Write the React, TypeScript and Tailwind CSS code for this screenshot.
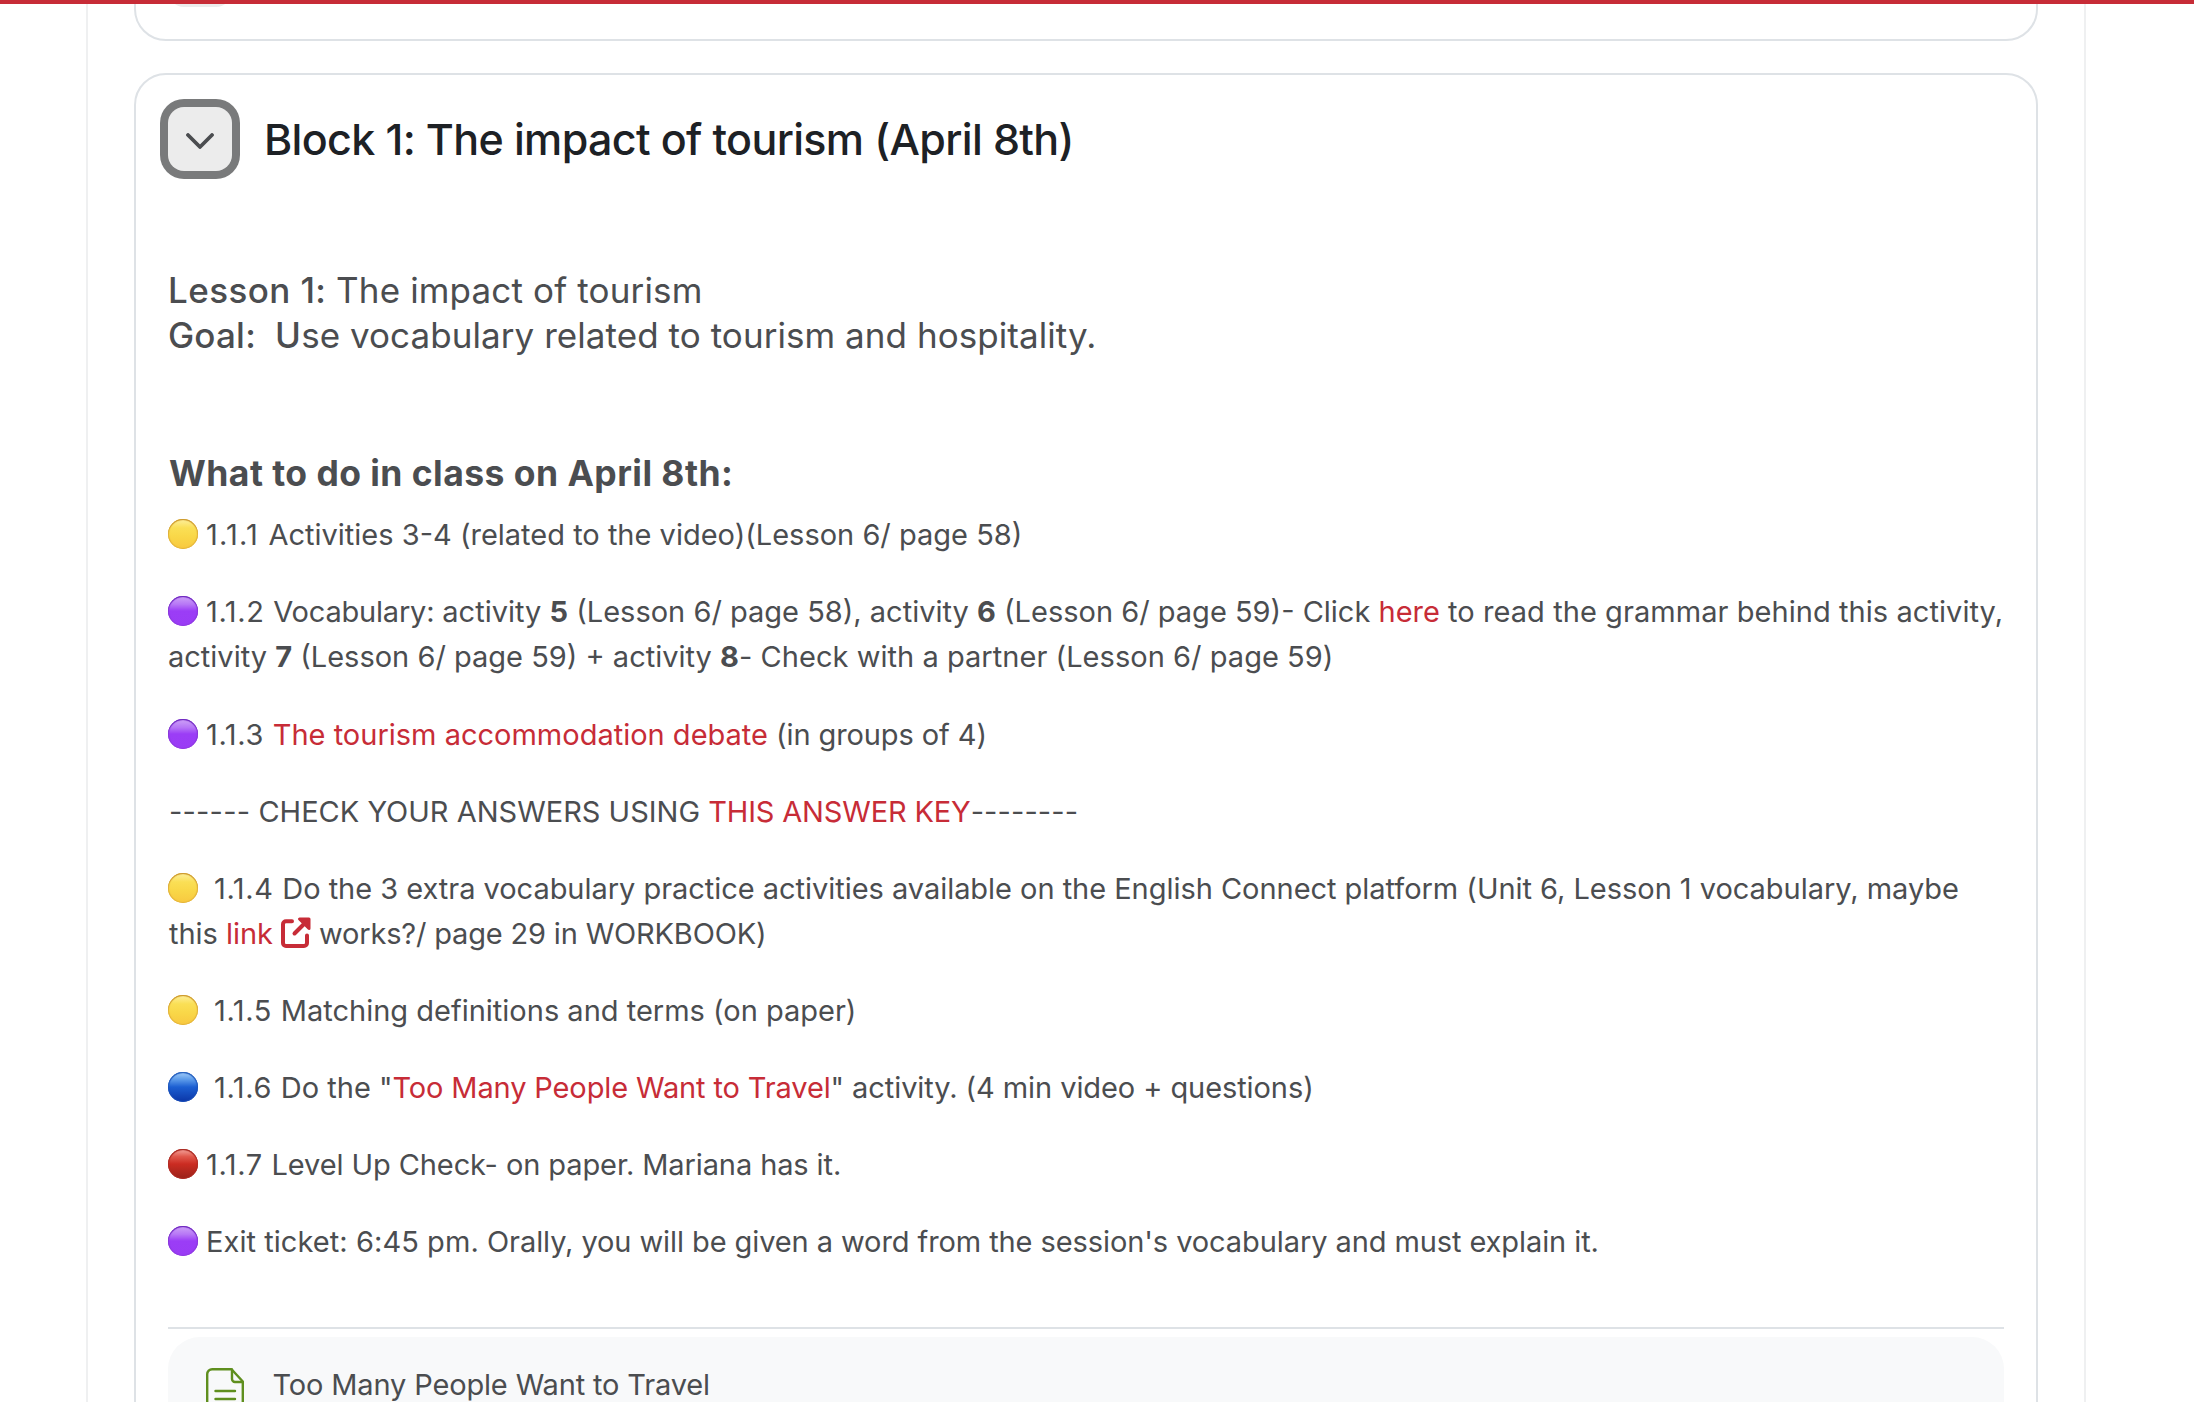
import type { ReactNode } from "react";

const DOT_COLORS = {
  yellow: "bg-[linear-gradient(180deg,#fdf0a0_0%,#fadf55_30%,#f9d748_60%,#f8c840_100%)] shadow-[inset_0_1px_1px_#c9962f,inset_0_0_1px_1px_#e3b33a]",
  purple: "bg-[linear-gradient(180deg,#cfa5f7_0%,#b777f6_28%,#9b3df6_50%,#9a3cf5_100%)] shadow-[inset_0_1px_1px_#6a28b8,inset_0_0_1px_1px_#8f3ae0]",
  blue: "bg-[linear-gradient(180deg,#a5cffa_0%,#5c9bea_25%,#1c5fd2_50%,#0b35a6_100%)] shadow-[inset_0_1px_1px_#2a66c0,inset_0_0_1px_1px_#1a4fb8]",
  red: "bg-[linear-gradient(180deg,#f5a8a0_0%,#e0584c_25%,#cb2c22_50%,#98221a_100%)] shadow-[inset_0_1px_1px_#a82a22,inset_0_0_1px_1px_#b02c24]",
};

function Dot({ color, wide = false }: { color: keyof typeof DOT_COLORS; wide?: boolean }) {
  return (
    <span
      className={`inline-block h-[30px] w-[30px] rounded-full align-[-4px] ${wide ? "mr-[16px]" : "mr-[8px]"} ${DOT_COLORS[color]}`}
    />
  );
}

function Num({ children }: { children: ReactNode }) {
  return <span className="tracking-[0.6px]">{children} </span>;
}

function Link({ children, className = "" }: { children: ReactNode; className?: string }) {
  return (
    <a href="#" className={`text-[#c72c37] ${className}`}>
      {children}
    </a>
  );
}

function ExternalIcon() {
  return (
    <svg viewBox="0 0 30 31" className="mx-2 inline-block h-[31px] w-[30px] align-[-4px]" fill="none" stroke="#c72c37" strokeWidth="4" strokeLinecap="round" strokeLinejoin="round">
      <path d="M11 4.2H5a3 3 0 0 0-3 3V26a3 3 0 0 0 3 3h18a3 3 0 0 0 3-3v-7.500" />
      <path d="M13.500 16.500 27 3" />
      <path d="M18.500 2H28v9.500z" strokeWidth="3" fill="#c72c37" />
    </svg>
  );
}

function PageIcon() {
  return (
    <svg viewBox="0 0 38 48" className="h-12 w-[38px] shrink-0" fill="none" stroke="#5f8f1e" strokeWidth="2.4" strokeLinecap="round" strokeLinejoin="round">
      <path d="M25.500 1.200H6.200a5 5 0 0 0-5 5v35.600a5 5 0 0 0 5 5h25.600a5 5 0 0 0 5-5V13.500z" />
      <path d="M26 1.500v9.500a3 3 0 0 0 3 3h7.500" />
      <path d="M9.500 23h19.500M9.500 31h19.500M9.500 39h19.500" />
    </svg>
  );
}

export default function App() {
  return (
    <div className="relative h-[1402px] w-full overflow-hidden bg-white font-['Inter','Liberation_Sans',sans-serif] text-[#4b4d50]">
      <div className="absolute inset-x-0 top-0 z-10 h-1 bg-[#c72c37]" />

      <main className="ml-[86px] flow-root h-full w-[2000px] border-x-2 border-[#eff0f1] px-[46px]">
        {/* Previous section, scrolled almost out of view */}
        <section className="-mt-[59px] flex h-[100px] items-end rounded-[32px] border-2 border-[#dee2e6] px-8 pb-8">
          <div className="h-16 w-16 shrink-0 rounded-2xl bg-[#ececec]" />
        </section>

        <section className="mt-8 h-[1500px] rounded-[32px] border-2 border-[#dee2e6] px-8 pt-8">
          <header className="flex h-16 items-center">
            <button className="flex h-16 w-16 items-center justify-center rounded-2xl bg-[#ececec] shadow-[0_0_0_8px_#797a7b]">
              <svg viewBox="0 0 28 16" className="mt-1 h-4 w-7" fill="none" stroke="#4b4d50" strokeWidth="3.8" strokeLinecap="round" strokeLinejoin="round">
                <path d="M2 2l12 12L26 2" />
              </svg>
            </button>
            <h3 className="ml-8 text-[43px] leading-[52px] font-medium tracking-[-0.65px] text-[#1d2125]">
              Block 1: The impact of tourism (April 8th)
            </h3>
          </header>

          <div className="mt-[97px] text-[35px] leading-[45px] whitespace-pre">
            <p className="tracking-[0.15px]">
              <span className="font-medium tracking-[0.4px]">Lesson 1: </span>The impact of tourism
            </p>
            <p className="tracking-[0.06px]">
              <span className="font-medium tracking-[0.2px]">{"Goal:  U"}</span>se vocabulary related to tourism and hospitality.
            </p>
          </div>

          <h4 className="mt-[93px] ml-px text-[35.5px] leading-[45px] font-bold tracking-[0.45px]">
            What to do in class on April 8th:
          </h4>

          <div className="mt-4 text-[29px] leading-[45px] whitespace-nowrap">
            <p className="mb-8">
              <Dot color="yellow" /><span className="tracking-[1.2px]">1.1.1 </span>Activities 3-4 (related to the video)(Lesson 6/ page 58)
            </p>
            <p className="mb-[33px]">
              <Dot color="purple" /><Num>1.1.2</Num><span className="tracking-[-0.2px]">Vocabulary: </span>activity <b>5</b> (Lesson 6/ page 58), activity <b>6</b> (Lesson 6/ page 59)- Click{" "}
              <Link>here</Link> <span className="tracking-[0.06px]">to read the grammar behind this activity,</span>
              <br />
              activity <b>7</b> (Lesson 6/ page 59) + activity <b>8</b><span className="tracking-[0.04px]">- Check with a partner (Lesson 6/ page 59)</span>
            </p>
            <p className="mb-8">
              <Dot color="purple" /><Num>1.1.3</Num><Link>The tourism accommodation debate</Link>
              <span className="tracking-[-0.1px]"> (in groups of 4)</span>
            </p>
            <p className="mb-8">
              <span className="ml-px tracking-[0.2px]">------</span> CHECK YOUR ANSWERS USING <Link className="tracking-[-0.15px]">THIS ANSWER KEY</Link>
              <span className="tracking-[0.1px]">--------</span>
            </p>
            <p className="mb-8 tracking-[-0.035px]">
              <Dot color="yellow" wide /><Num>1.1.4</Num>Do the 3 extra vocabulary practice activities available on the English Connect platform (Unit 6, Lesson 1 vocabulary, maybe
              <br />
              <span className="ml-px">this </span><Link>link<ExternalIcon /></Link>
              <span className="tracking-[-0.17px]">works?/ page 29 in WORKBOOK)</span>
            </p>
            <p className="mb-8">
              <Dot color="yellow" wide /><Num>1.1.5</Num>Matching definitions and terms (on paper)
            </p>
            <p className="mb-8">
              <Dot color="blue" wide /><Num>1.1.6</Num>Do the "
              <Link className="tracking-[-0.13px]">Too Many People Want to Travel</Link>
              <span className="tracking-[-0.08px]">" activity. (4 min video + questions)</span>
            </p>
            <p className="mb-8 tracking-[-0.1px]">
              <Dot color="red" /><Num>1.1.7</Num>Level Up Check- on paper. Mariana has it.
            </p>
            <p>
              <Dot color="purple" /><span className="tracking-[0.06px]">Exit ticket: 6:45 pm. </span>
              <span className="tracking-[-0.09px]">Orally, you will be given a word from the session's vocabulary and must explain it.</span>
            </p>
          </div>

          <hr className="mt-[63px] border-t-2 border-[#dee2e6]" />

          <div className="mt-2 flex h-32 items-start rounded-[32px] bg-[#f8f9fa] pt-[25px] pl-[38px]">
            <div className="pt-[6px]">
              <PageIcon />
            </div>
            <span className="ml-[28.5px] text-[29px] leading-[45px] tracking-[-0.15px]">Too Many People Want to Travel</span>
          </div>
        </section>
      </main>
    </div>
  );
}
